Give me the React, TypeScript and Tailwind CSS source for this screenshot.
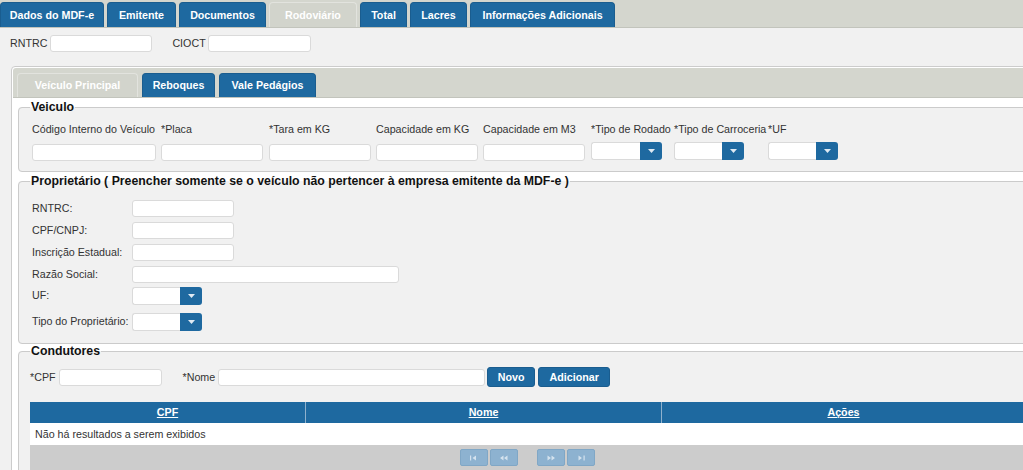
import React from 'react';

const topTabs = [
  { label: 'Dados do MDF-e', w: 'w-[104px]' },
  { label: 'Emitente', w: 'w-[69px]' },
  { label: 'Documentos', w: 'w-[87px]' },
  { label: 'Rodoviário', w: 'w-[88px]', active: true },
  { label: 'Total', w: 'w-[47px]' },
  { label: 'Lacres', w: 'w-[57px]' },
  { label: 'Informações Adicionais', w: 'w-[145px]' },
];

const innerTabs = [
  { label: 'Veículo Principal', w: 'w-[121px]', active: true },
  { label: 'Reboques', w: 'w-[73px]' },
  { label: 'Vale Pedágios', w: 'w-[97px]' },
];

const Field = ({ className = 'w-[102px]' }: { className?: string }) => (
  <input
    type="text"
    className={`h-[17px] bg-white border border-[#dadada] rounded-[3px] outline-none ${className}`}
  />
);

const Select = ({ className = 'w-[71px]' }: { className?: string }) => (
  <div className={`flex h-[18px] ${className}`}>
    <div className="flex-1 bg-white border border-r-0 border-[#dadada] rounded-l-[3px]" />
    <div className="w-[22px] bg-[#1e69a0] rounded-r-[3px] flex items-center justify-center">
      <svg width="7" height="4" viewBox="0 0 7 4">
        <path d="M0 0h7L3.5 4z" fill="#dfeaf3" />
      </svg>
    </div>
  </div>
);

const veiculoCols = [
  { label: 'Código Interno do Veículo', col: 'w-[129px]', field: 'w-[124px]' },
  { label: '*Placa', col: 'w-[108px]', field: 'w-[102px]' },
  { label: '*Tara em KG', col: 'w-[107px]', field: 'w-[102px]' },
  { label: 'Capacidade em KG', col: 'w-[107px]', field: 'w-[102px]' },
  { label: 'Capacidade em M3', col: 'w-[108px]', field: 'w-[102px]' },
  { label: '*Tipo de Rodado', col: 'w-[83px]', select: 'w-[71px]' },
  { label: '*Tipo de Carroceria', col: 'w-[94px]', select: 'w-[70px]' },
  { label: '*UF', col: 'w-[80px]', select: 'w-[70px]' },
];

const PageBtn = ({ d }: { d: string }) => (
  <div className="w-[28px] h-[17px] bg-[#8db2d0] border border-[#80a7c6] rounded-[2px] flex items-center justify-center">
    <svg width="10" height="6" viewBox="0 0 10 6">
      <path d={d} fill="#d4e2ee" />
    </svg>
  </div>
);

const legend = 'font-bold text-[12.3px] leading-[14px] text-[#111] px-[1px]';
const fieldset = 'mx-[5px] pl-[11px] border border-[#cbcbcb] rounded-[4px] bg-[#f1f1f1]';

export default function App() {
  return (
    <div className="w-[1023px] h-[470px] overflow-hidden bg-[#f1f1f1] text-[#333] text-[10.7px] leading-[13px] font-['Liberation_Sans',Arial,sans-serif]">
      <div className="w-[1060px]">
        {/* abas principais */}
        <div className="h-[28px] bg-[#d4d6ce] border-b border-[#c2c4bc] flex items-end gap-[3px]">
          {topTabs.map((t) => (
            <div
              key={t.label}
              className={`${t.w} h-[25px] rounded-t-[4px] border border-b-0 flex items-center justify-center font-bold ${
                t.active ? 'bg-[#d2d4cc] border-[#e2e3de] text-white' : 'bg-[#1e69a0] border-[#1a5d8f] text-white'
              }`}
            >
              {t.label}
            </div>
          ))}
        </div>

        <div className="flex items-center h-[17px] mt-[7px] mb-[14px] pl-[10px]">
          <span className="mr-[3px]">RNTRC</span>
          <Field />
          <span className="ml-[20px] mr-[2px]">CIOCT</span>
          <Field className="w-[103px]" />
        </div>

        {/* painel rodoviário */}
        <div className="ml-[11px] border border-[#cccccc] rounded-[4px] bg-white p-[1px]">
          <div className="h-[30px] bg-[#d4d6ce] border-b border-[#c2c4bc] rounded-t-[3px] flex items-end gap-[4px] pl-[4px]">
            {innerTabs.map((t) => (
              <div
                key={t.label}
                className={`${t.w} h-[24px] rounded-t-[4px] border border-b-0 flex items-center justify-center font-bold ${
                  t.active ? 'bg-[#d2d4cc] border-[#e2e3de] text-white' : 'bg-[#1e69a0] border-[#1a5d8f] text-white'
                }`}
              >
                {t.label}
              </div>
            ))}
          </div>

          <fieldset className={`${fieldset} mt-[2px]`}>
            <legend className={legend}>Veiculo</legend>
            <div className="flex pt-[9px] pb-[10px] pl-[2px]">
              {veiculoCols.map((c) => (
                <div key={c.label} className={`${c.col} flex flex-col`}>
                  <span className="whitespace-nowrap">{c.label}</span>
                  {c.select ? (
                    <div className="mt-[6px]">
                      <Select className={c.select} />
                    </div>
                  ) : (
                    <Field className={`mt-[8px] ${c.field}`} />
                  )}
                </div>
              ))}
            </div>
          </fieldset>

          <fieldset className={`${fieldset} mt-[2px]`}>
            <legend className={legend}>
              Proprietário ( Preencher somente se o veículo não pertencer à empresa emitente da MDF-e )
            </legend>
            <div className="pt-[9px] pb-[6px] pl-[2px]">
              <div className="flex items-center h-[22px]">
                <span className="w-[100px]">RNTRC:</span>
                <Field />
              </div>
              <div className="flex items-center h-[22px]">
                <span className="w-[100px]">CPF/CNPJ:</span>
                <Field />
              </div>
              <div className="flex items-center h-[22px]">
                <span className="w-[100px]">Inscrição Estadual:</span>
                <Field />
              </div>
              <div className="flex items-center h-[22px]">
                <span className="w-[100px]">Razão Social:</span>
                <Field className="w-[267px]" />
              </div>
              <div className="flex items-center h-[21px]">
                <span className="w-[100px]">UF:</span>
                <Select className="w-[70px]" />
              </div>
              <div className="flex items-center h-[31px]">
                <span className="w-[100px]">Tipo do Proprietário:</span>
                <Select className="w-[70px]" />
              </div>
            </div>
          </fieldset>

          <fieldset className={fieldset}>
            <legend className={legend}>Condutores</legend>
            <div className="flex items-center h-[22px] mt-[8px]">
              <span className="mr-[3px]">*CPF</span>
              <Field className="w-[103px]" />
              <span className="ml-[21px] mr-[3px]">*Nome</span>
              <Field className="w-[267px]" />
              <button className="ml-[2px] w-[48px] h-[20px] bg-[#1e69a0] border border-[#1a5d8f] rounded-[3px] text-white font-bold">
                Novo
              </button>
              <button className="ml-[3px] w-[72px] h-[20px] bg-[#1e69a0] border border-[#1a5d8f] rounded-[3px] text-white font-bold">
                Adicionar
              </button>
            </div>

            <div className="w-[995px] mt-[14px]">
              <div className="flex h-[21px] bg-[#1e69a0] text-white font-bold">
                <div className="w-[275px] flex items-center justify-center underline">CPF</div>
                <div className="w-[356px] flex items-center justify-center underline border-l border-[#8fb1cd]">Nome</div>
                <div className="flex-1 flex items-center justify-center underline border-l border-[#8fb1cd]">Ações</div>
              </div>
              <div className="h-[22px] bg-white flex items-center pl-[5px]">Não há resultados a serem exibidos</div>
              <div className="h-[30px] bg-[#cccccc] flex justify-center pt-[4px] gap-[2px]">
                <PageBtn d="M1 0.5h1.2v5H1zM3.5 3L7 0.5v5z" />
                <PageBtn d="M1 3L4.5 0.5v5zM5 3L8.5 0.5v5z" />
                <div className="w-[15px]" />
                <PageBtn d="M1.5 0.5L5 3 1.5 5.5zM5.5 0.5L9 3 5.5 5.5z" />
                <PageBtn d="M2.5 0.5L6 3 2.5 5.5zM7.5 0.5h1.2v5H7.5z" />
              </div>
            </div>
          </fieldset>
        </div>
      </div>
    </div>
  );
}
